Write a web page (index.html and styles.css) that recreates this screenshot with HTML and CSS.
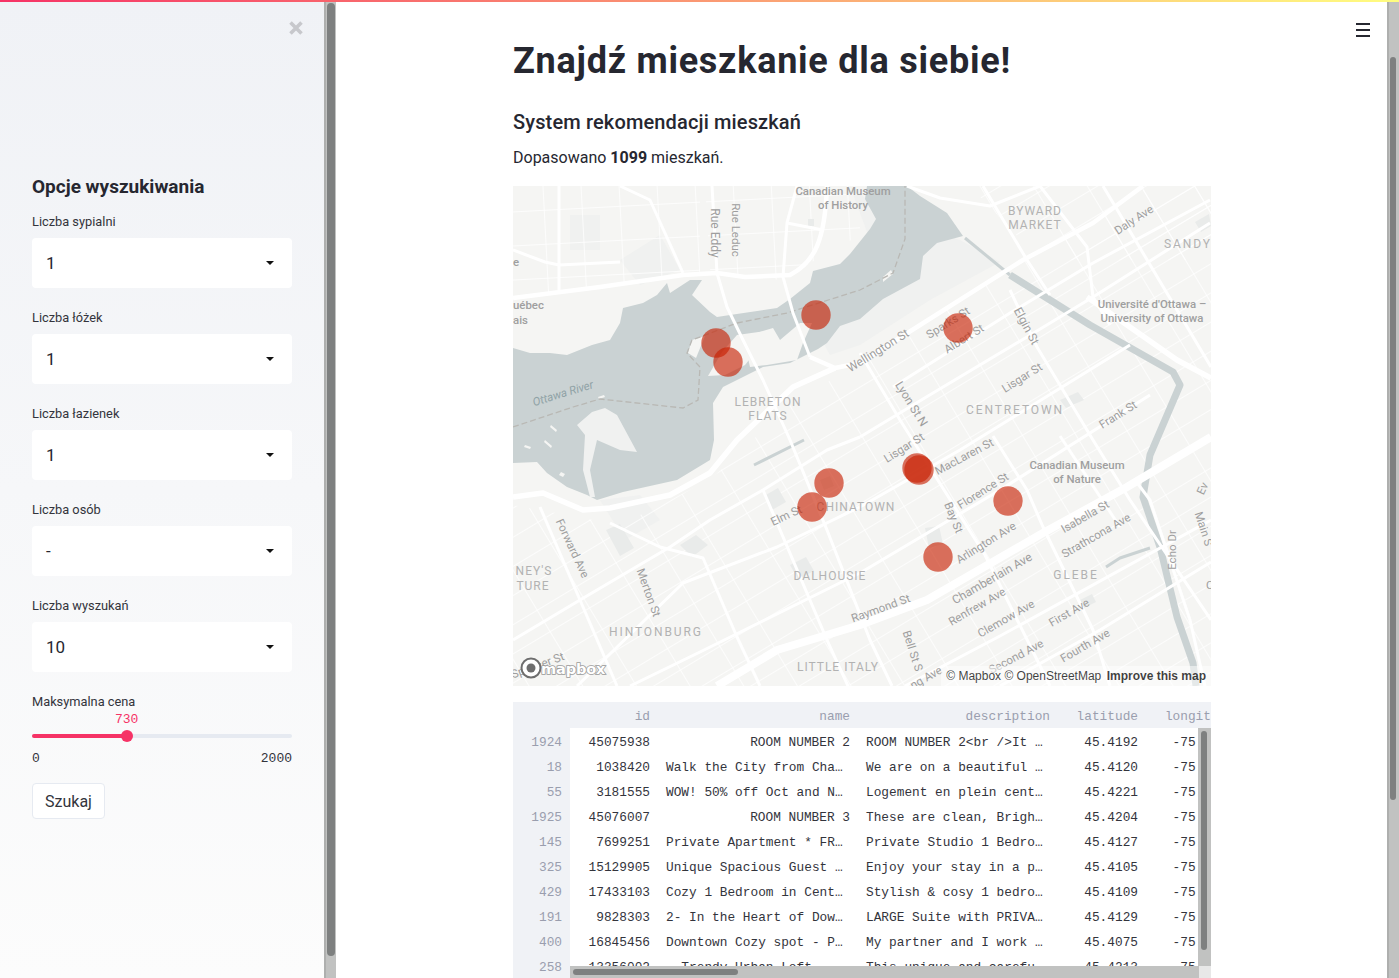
FILE: index.html
```html
<!DOCTYPE html>
<html lang="pl">
<head>
<meta charset="utf-8">
<title>Znajdź mieszkanie dla siebie!</title>
<link rel="stylesheet" href="styles.css">
</head>
<body>
<div class="decoration"></div>
<div class="app">
  <aside class="sidebar">
    <svg class="close" viewBox="0 0 16 16" width="16" height="16"><path d="M2.5 2.5l11 11M13.5 2.5l-11 11"/></svg>
    <h2 class="side-title">Opcje wyszukiwania</h2>
    <div class="field"><label class="field-label">Liczba sypialni</label><div class="select"><span>1</span><i class="caret"></i></div></div>
    <div class="field"><label class="field-label">Liczba łóżek</label><div class="select"><span>1</span><i class="caret"></i></div></div>
    <div class="field"><label class="field-label">Liczba łazienek</label><div class="select"><span>1</span><i class="caret"></i></div></div>
    <div class="field"><label class="field-label">Liczba osób</label><div class="select"><span>-</span><i class="caret"></i></div></div>
    <div class="field"><label class="field-label">Liczba wyszukań</label><div class="select"><span>10</span><i class="caret"></i></div></div>
    <div class="slider">
      <label class="field-label">Maksymalna cena</label>
      <div class="slider-value">730</div>
      <div class="slider-track"><div class="slider-fill"></div><div class="slider-thumb"></div></div>
      <div class="slider-range"><span>0</span><span>2000</span></div>
    </div>
    <button class="btn">Szukaj</button>
  </aside>
  <div class="scrollbar side-bar"><div class="thumb"></div></div>

  <main class="main">
    <div class="hamburger"><i></i><i></i><i></i></div>
    <div class="content">
      <h1>Znajdź mieszkanie dla siebie!</h1>
      <h3>System rekomendacji mieszkań</h3>
      <p>Dopasowano <b>1099</b> mieszkań.</p>
      <div class="map">
        <svg class="map-svg" viewBox="513 186 698 500" width="698" height="500">
          <defs>
            <pattern id="gridA" width="46" height="25" patternUnits="userSpaceOnUse" patternTransform="rotate(-31 900 450)">
              <path d="M0 0H46M0 0V25" stroke="#fff" stroke-width="1.5" fill="none"/>
            </pattern>
            <pattern id="gridB" width="38" height="34" patternUnits="userSpaceOnUse" patternTransform="rotate(-3)">
              <path d="M0 0H38M0 0V34" stroke="#fff" stroke-width="1.5" fill="none"/>
            </pattern>
          </defs>
          <rect x="513" y="186" width="698" height="500" class="land"/>
          <!-- pale park areas -->
          <path class="park" d="M850 186L880 210 960 240 1000 262 930 300 860 345 830 355 800 300 870 240Z"/>
          <path class="park" d="M600 500L640 495 660 520 625 540Z"/>
          <path class="park" d="M570 215H600V250H570ZM620 260L660 235 680 270 640 285Z"/>
          <!-- minor streets -->
          <path fill="url(#gridA)" d="M790 405L880 350 1020 262 1150 186H1211V686H513V505L620 525 710 480Z"/>
          <path fill="url(#gridA)" d="M970 186H1211V260L1040 260Z"/>
          <path fill="url(#gridB)" d="M513 186H700V275L513 298Z"/>
          <path fill="url(#gridB)" d="M705 186H860V235L780 280 710 270Z"/>
          <!-- blocks -->
          <path class="block" d="M764 496l14-8 8 14-14 8ZM790 565l16-8 8 14-16 8ZM925 528l14-2 4 18-14 4ZM606 530l14-6 14 24-14 8ZM680 545l16-10 12 10-16 12ZM820 480l10-4 4 10-10 4ZM1060 400l18-8 6 8-18 8ZM1195 222l14-8 2 12-10 6ZM808 219h6v7h-6ZM1080 600l12-6 4 8-12 6Z"/>
          <!-- water -->
          <path class="water" d="M513 348L530 353 550 353 567 355 592 345 610 340 620 323 623 308 643 303 657 295 667 283 670 293 690 280 702 280 692 295 710 312 717 317 730 315 777 308 790 299 810 283 813 271 840 264 850 254 870 229 876 219 865 199 867 186H907L920 196 947 213 963 236 937 243 923 256 920 279 883 299 860 319 840 326 827 343 818 349 790 363 763 367 743 377 723 387 713 403 714 440 710 460 677 480 623 492 597 500 587 495 567 487 547 473 537 462 513 463Z"/>
          <path class="land" d="M737 335L773 330 745 365 725 375 708 376 722 352Z"/>
          <path class="land" d="M743 337L773 328 780 340 800 323 812 323 803 343 797 360 767 365 750 367Z"/>
          <path class="land" d="M692 340L705 336 696 358 688 353Z"/>
          <path class="park" d="M577 425L592 412 605 408 617 415 637 452 620 450 597 440 590 470 595 497 590 497 583 470 585 435Z"/>
          <path class="land" d="M545 440l7 6-1 2-7-6ZM551 425l6 5-1 2-6-5ZM561 472l4 2-2 3-4-2ZM883 277l8-7 2 4-10 8ZM525 445l6 2-1 2-6-2ZM598 397l6-2 1 2-6 2Z"/>
          <!-- boundary -->
          <path class="border" d="M513 427L573 407 600 399 683 408 698 400 700 367 687 353 692 340 737 323 787 313 860 290 893 273 905 239V186"/>
          <!-- canal -->
          <path class="canal thin" d="M965 238L1010 275"/>
          <path class="canal" d="M1010 275L1090 325 1173 372 1180 385 1165 420 1150 455 1143 497 1160 547 1177 617 1193 663 1196 686"/>
          <path class="canal thin" d="M1106 567L1120 558 1150 548M754 465L804 440"/>
          <!-- main roads -->
          <g class="road">
            <path d="M559 186V290M513 250L545 262 559 265 620 262"/>
            <path d="M620 186L650 200 683 273"/>
            <path d="M712 186L717 273 727 307 743 340 763 380 790 440 827 530 870 640 892 686"/>
            <path d="M797 186L787 223 783 277 793 313 810 357"/>
            <path d="M787 223L823 230"/>
            <path d="M907 186L940 198 990 206 1040 186"/>
            <path d="M893 387L1010 313 1093 263 1210 200"/>
            <path d="M860 437L933 393 1027 337 1093 297 1210 223"/>
            <path d="M983 186L1027 260 1050 295M1040 186L1087 247 1093 297 1110 325"/>
            <path d="M1103 186L1211 367"/>
            <path d="M1010 290L1037 347 1093 440 1130 500 1211 620"/>
            <path d="M993 436L1027 490 1043 527 1093 630 1110 686"/>
            <path d="M1060 436L1120 527"/>
            <path d="M860 573L1000 490 1150 395M860 507L960 450 1130 345"/>
            <path d="M860 353L900 420 985 555 1050 686"/>
            <path d="M513 640L580 600 670 547 710 520 763 490 827 450 860 437"/>
            <path d="M540 507L580 600 617 686"/>
            <path d="M610 523L660 547 703 558 737 637 760 686"/>
            <path d="M577 686L683 583 777 547 860 507"/>
            <path d="M630 686L700 652 860 573"/>
            <path d="M763 490L827 640 848 686"/>
            <path d="M905 686L1000 636 1211 520"/>
            <path d="M1211 562L1100 630 1000 686"/>
            <path d="M1135 480L1150 500 1170 560 1190 620 1205 686"/>
          </g>
          <path class="road mid" d="M513 298L600 287 683 275 717 273 745 277 790 275C815 262 825 240 827 186"/>
          <path class="road mid" d="M810 357L835 368 860 363 1023 260 1093 223 1143 186"/>
          <path class="road wide" d="M513 497L543 493 583 510 610 508 670 495 710 473 737 440 793 387 835 368"/>
          <path class="road wide" d="M1087 297L1177 360 1211 378"/>
          <path class="road wider" d="M1211 437L1127 487 1043 533 927 600 860 625 777 650 717 686"/>
          <!-- labels -->
          <g class="lbl">
            <text class="p" x="843" y="195">Canadian Museum</text><text class="p" x="843" y="209">of History</text>
            <text class="p" x="1077" y="469">Canadian Museum</text><text class="p" x="1077" y="483">of Nature</text>
            <text class="p" x="1152" y="308">Université d'Ottawa –</text><text class="p" x="1152" y="322">University of Ottawa</text>
            <text class="p st" x="513" y="309">uébec</text><text class="p st" x="513" y="324">ais</text><text class="p st" x="513" y="266">e</text>
            <text transform="translate(711 233) rotate(90)">Rue Eddy</text>
            <text class="s" transform="translate(732 230) rotate(90)">Rue Leduc</text>
            <text class="s" transform="translate(1136 223) rotate(-33)">Daly Ave</text>
            <text transform="translate(880 354) rotate(-32)">Wellington St</text>
            <text class="s" transform="translate(950 326) rotate(-32)">Sparks St</text>
            <text class="s" transform="translate(966 342) rotate(-32)">Albert St</text>
            <text transform="translate(1023 328) rotate(62)">Elgin St</text>
            <text class="s" transform="translate(1024 381) rotate(-32)">Lisgar St</text>
            <text transform="translate(908 406) rotate(58)">Lyon St N</text>
            <text class="s" transform="translate(1120 418) rotate(-32)">Frank St</text>
            <text class="s" transform="translate(906 451) rotate(-32)">Lisgar St</text>
            <text class="s" transform="translate(966 460) rotate(-28)">MacLaren St</text>
            <text class="s" transform="translate(985 494) rotate(-32)">Florence St</text>
            <text class="s" transform="translate(950 519) rotate(68)">Bay St</text>
            <text class="s" transform="translate(1087 520) rotate(-30)">Isabella St</text>
            <text class="s" transform="translate(1098 539) rotate(-30)">Strathcona Ave</text>
            <text class="s" transform="translate(988 546) rotate(-32)">Arlington Ave</text>
            <text transform="translate(994 582) rotate(-30)">Chamberlain Ave</text>
            <text class="s" transform="translate(979 610) rotate(-30)">Renfrew Ave</text>
            <text class="s" transform="translate(1008 622) rotate(-30)">Clemow Ave</text>
            <text class="s" transform="translate(1071 616) rotate(-30)">First Ave</text>
            <text class="s" transform="translate(1087 649) rotate(-30)">Fourth Ave</text>
            <text class="s" transform="translate(1018 660) rotate(-28)">Second Ave</text>
            <text class="s" transform="translate(1176 550) rotate(-90)">Echo Dr</text>
            <text class="s" transform="translate(1200 530) rotate(72)">Main S</text>
            <text class="s" transform="translate(1206 490) rotate(-65)">Ev</text>
            <text class="s st" x="1206" y="589">C</text>
            <text class="s" transform="translate(882 612) rotate(-20)">Raymond St</text>
            <text class="s" transform="translate(909 652) rotate(72)">Bell St S</text>
            <text class="s" transform="translate(928 681) rotate(-30)">ng Ave</text>
            <text class="s" transform="translate(569 550) rotate(65)">Forward Ave</text>
            <text class="s" transform="translate(645 594) rotate(70)">Merton St</text>
            <text class="s" transform="translate(788 519) rotate(-25)">Elm St</text>
            <text class="s" transform="translate(539 669) rotate(-20)">Spencer St</text>
          </g>
          <g class="hood">
            <text x="1035" y="215">BYWARD</text><text x="1035" y="229">MARKET</text>
            <text class="wide" x="1188" y="248">SANDY</text>
            <text x="768" y="406">LEBRETON</text><text x="768" y="420">FLATS</text>
            <text class="wide" x="1015" y="414">CENTRETOWN</text>
            <text x="856" y="511">CHINATOWN</text>
            <text x="830" y="580">DALHOUSIE</text>
            <text class="wide" x="1076" y="579">GLEBE</text>
            <text class="wide" x="656" y="636">HINTONBURG</text>
            <text x="838" y="671">LITTLE ITALY</text>
            <text x="534" y="575">NEY'S</text><text x="533" y="590">TURE</text>
          </g>
          <text class="river" transform="translate(564 397) rotate(-17)">Ottawa River</text>
          <!-- data points -->
          <g class="pts">
            <circle cx="816" cy="315" r="14.7"/><circle cx="716" cy="343" r="14.7"/><circle cx="728" cy="362" r="14.7"/>
            <circle cx="958" cy="328" r="14.7"/><circle cx="829" cy="483" r="14.7"/><circle cx="812" cy="507" r="14.7"/>
            <circle cx="1008" cy="501" r="14.7"/><circle cx="938" cy="557" r="14.7"/>
            <circle cx="917" cy="468" r="14.7"/><circle cx="919" cy="470" r="14.7"/>
          </g>
          <!-- logo -->
          <g class="logo">
            <circle cx="531" cy="668" r="9.5" class="logo-ring"/>
            <circle cx="531" cy="668" r="4.5" class="logo-core"/>
            <text x="541" y="674">mapbox</text>
          </g>
        </svg>
        <div class="attrib">© Mapbox © OpenStreetMap <b>Improve this map</b></div>
      </div>

      <div class="frame">
        <table class="df">
          <colgroup><col class="c0"><col class="c1"><col class="c2"><col class="c2"><col class="c1"><col class="c3"></colgroup>
          <thead><tr><th></th><th>id</th><th>name</th><th>description</th><th>latitude</th><th>longitude</th></tr></thead>
          <tbody>
            <tr><th>1924</th><td>45075938</td><td>ROOM NUMBER 2</td><td class="l">ROOM NUMBER 2&lt;br /&gt;It …</td><td>45.4192</td><td>-75.6952</td></tr>
            <tr><th>18</th><td>1038420</td><td class="l">Walk the City from Cha…</td><td class="l">We are on a beautiful …</td><td>45.4120</td><td>-75.6984</td></tr>
            <tr><th>55</th><td>3181555</td><td class="l">WOW! 50% off Oct and N…</td><td class="l">Logement en plein cent…</td><td>45.4221</td><td>-75.6989</td></tr>
            <tr><th>1925</th><td>45076007</td><td>ROOM NUMBER 3</td><td class="l">These are clean, Brigh…</td><td>45.4204</td><td>-75.6952</td></tr>
            <tr><th>145</th><td>7699251</td><td class="l">Private Apartment * FR…</td><td class="l">Private Studio 1 Bedro…</td><td>45.4127</td><td>-75.6912</td></tr>
            <tr><th>325</th><td>15129905</td><td class="l">Unique Spacious Guest …</td><td class="l">Enjoy your stay in a p…</td><td>45.4105</td><td>-75.6943</td></tr>
            <tr><th>429</th><td>17433103</td><td class="l">Cozy 1 Bedroom in Cent…</td><td class="l">Stylish &amp; cosy 1 bedro…</td><td>45.4109</td><td>-75.6921</td></tr>
            <tr><th>191</th><td>9828303</td><td class="l">2- In the Heart of Dow…</td><td class="l">LARGE Suite with PRIVA…</td><td>45.4129</td><td>-75.6908</td></tr>
            <tr><th>400</th><td>16845456</td><td class="l">Downtown Cozy spot - P…</td><td class="l">My partner and I work …</td><td>45.4075</td><td>-75.6900</td></tr>
            <tr><th>258</th><td>13356002</td><td class="l">· Trendy Urban Loft ·</td><td class="l">This unique and carefu…</td><td>45.4213</td><td>-75.6990</td></tr>
          </tbody>
        </table>
        <div class="frame-v"><div class="thumb"></div></div>
        <div class="frame-h"><div class="thumb"></div></div>
        <div class="frame-corner"></div>
      </div>
    </div>
  </main>
  <div class="scrollbar main-bar"><div class="thumb"></div></div>
</div>
</body>
</html>
```

FILE: styles.css
```css
* { box-sizing: border-box; }
html, body { margin: 0; padding: 0; height: 978px; overflow: hidden; background: #fff; }
body { font-family: Roboto, "Noto Sans", sans-serif; color: #262730; }

.decoration { position: absolute; top: 0; left: 0; right: 0; height: 2px; z-index: 5; background: linear-gradient(90deg, #f63366, #fffd80); }
.app { display: flex; height: 978px; }

/* sidebar */
.sidebar { position: relative; width: 324px; flex: none; padding: 176px 32px 0; background: linear-gradient(180deg, #f0f2f6, #fcfcfc); }
.close { position: absolute; top: 20px; left: 288px; }
.close path { stroke: #c7c8cc; stroke-width: 3.6; fill: none; }
.side-title { margin: 0 0 16px; font-size: 19px; line-height: 22px; font-weight: 700; }
.field { margin-bottom: 22px; }
.field-label { display: block; font-size: 12.8px; line-height: 16px; margin-bottom: 8px; color: #33343c; }
.select { display: flex; align-items: center; justify-content: space-between; height: 50px; padding: 0 18px 0 14px; background: #fff; border-radius: 4px; font-size: 17px; }
.caret { width: 0; height: 0; border-left: 4px solid transparent; border-right: 4px solid transparent; border-top: 4px solid #111; }

.slider { margin-top: 1px; }
.slider .field-label { margin-bottom: 0; }
.slider-value { margin-top: 2px; font-family: "Liberation Mono", monospace; font-size: 13px; line-height: 16px; color: #f63366; padding-left: 83px; }
.slider-track { position: relative; height: 4px; margin-top: 6px; background: #e6eaf1; border-radius: 2px; }
.slider-fill { width: 95px; height: 4px; background: #f63366; border-radius: 2px; }
.slider-thumb { position: absolute; left: 89px; top: -4px; width: 12px; height: 12px; background: #f63366; border-radius: 50%; }
.slider-range { display: flex; justify-content: space-between; margin-top: 13px; font-family: "Liberation Mono", monospace; font-size: 13px; line-height: 16px; color: #33343c; }
.btn { display: block; margin-top: 16px; width: 73px; height: 36px; padding: 0; background: #fff; border: 1px solid #e6eaf1; border-radius: 4px; font: 400 16px Roboto, sans-serif; color: #33343c; }

/* fake scrollbars */
.scrollbar { flex: none; width: 12px; background: #c1c2c1; }
.side-bar { border-left: 2px solid #aeafae; padding: 3px 1px 0 1px; }
.side-bar .thumb { height: 953px; }
.main-bar { border-left: 2px solid #aeafae; padding: 57px 3px 0 1px; }
.main-bar .thumb { height: 743px; }
.thumb { background: #7e8080; border-radius: 4px; }

/* main */
.main { position: relative; flex: 1; min-width: 0; }
.hamburger { position: absolute; top: 23px; left: 1020px; display: flex; flex-direction: column; gap: 4px; width: 14px; }
.hamburger i { display: block; height: 2px; background: #262730; }
.content { width: 698px; margin-left: 177px; padding-top: 38px; }
h1 { margin: 0; font-size: 36px; line-height: 46px; font-weight: 700; letter-spacing: .75px; }
h3 { margin: 24px 0 0; font-size: 20px; line-height: 28px; font-weight: 500; letter-spacing: .14px; }
p { margin: 10px 0 0; font-size: 16px; line-height: 24px; }
p b { font-weight: 700; }

/* map */
.map { position: relative; width: 698px; height: 500px; margin-top: 16px; overflow: hidden; }
.map-svg { display: block; }
.land { fill: #f5f5f3; }
.park { fill: #f0f1f0; }
.block { fill: #e9ebea; }
.water { fill: #cad2d3; }
.border { fill: none; stroke: #b9b8b4; stroke-width: 1.3; stroke-dasharray: 6 3; }
.canal { fill: none; stroke: #cad2d3; stroke-width: 7; stroke-linejoin: round; }
.canal.thin { stroke-width: 3; }
.road { fill: none; stroke: #fff; stroke-width: 3; stroke-linejoin: round; }
.road.mid { stroke-width: 4.5; }
.road.wide { stroke-width: 5.5; }
.road.wider { stroke-width: 8; }
.lbl text { font-family: Roboto, sans-serif; font-size: 12px; fill: #9e9e9e; text-anchor: middle; }
.lbl text.s { font-size: 11.5px; }
.lbl text.p { font-size: 11.4px; font-weight: 500; fill: #9f9f9f; }
.lbl text.st { text-anchor: start; }
.hood text { font-family: Roboto, sans-serif; font-size: 12px; letter-spacing: 1px; fill: #b2b2b2; text-anchor: middle; }
.hood text.wide { letter-spacing: 1.9px; }
.river { font-family: Roboto, sans-serif; font-size: 11.5px; font-style: italic; fill: #90a2a6; text-anchor: middle; }
.pts circle { fill: rgb(200, 30, 0); fill-opacity: .627; }
.logo-ring { fill: #fff; stroke: #6e6e6e; stroke-width: 2; }
.logo-core { fill: #6e6e6e; }
.logo text { font-family: "DejaVu Sans", sans-serif; font-size: 14.6px; font-weight: 700; fill: #fff; stroke: #9a9a9a; stroke-width: 1.6px; paint-order: stroke; letter-spacing: -.2px; }
.attrib { position: absolute; right: 0; bottom: 0; height: 20px; padding: 0 5px; line-height: 20px; background: rgba(255, 255, 255, .5); font-family: "Liberation Sans", sans-serif; font-size: 12px; color: rgba(0, 0, 0, .75); white-space: nowrap; }
.attrib b { margin-left: 2px; }

/* dataframe */
.frame { position: relative; width: 698px; height: 276px; margin-top: 16px; overflow: hidden; }
.df { border-collapse: collapse; table-layout: fixed; width: 729px; font-family: "Liberation Mono", monospace; font-size: 12.8px; }
.c0 { width: 57px; } .c1 { width: 88px; } .c2 { width: 200px; } .c3 { width: 96px; }
.df th, .df td { height: 25px; padding: 4px 8px 0; text-align: right; font-weight: 400; white-space: nowrap; overflow: hidden; }
.df thead th { height: 26px; padding-top: 2px; background: #f0f2f6; color: #9a9eae; }
.df tbody th { background: #f0f2f6; color: #9a9eae; }
.df td { color: #33343c; }
.df td.l { text-align: left; }
.frame-v { position: absolute; right: 0; top: 26px; bottom: 12px; width: 13px; padding: 3px 4px 0 3px; background: #c1c2c1; }
.frame-v .thumb { height: 219px; }
.frame-h { position: absolute; left: 57px; right: 12px; bottom: 0; height: 12px; padding: 3px 0 0 3px; background: #c1c2c1; }
.frame-h .thumb { width: 165px; height: 6px; }
.frame-corner { position: absolute; right: 0; bottom: 0; width: 12px; height: 12px; background: #e8e8e8; }
```
